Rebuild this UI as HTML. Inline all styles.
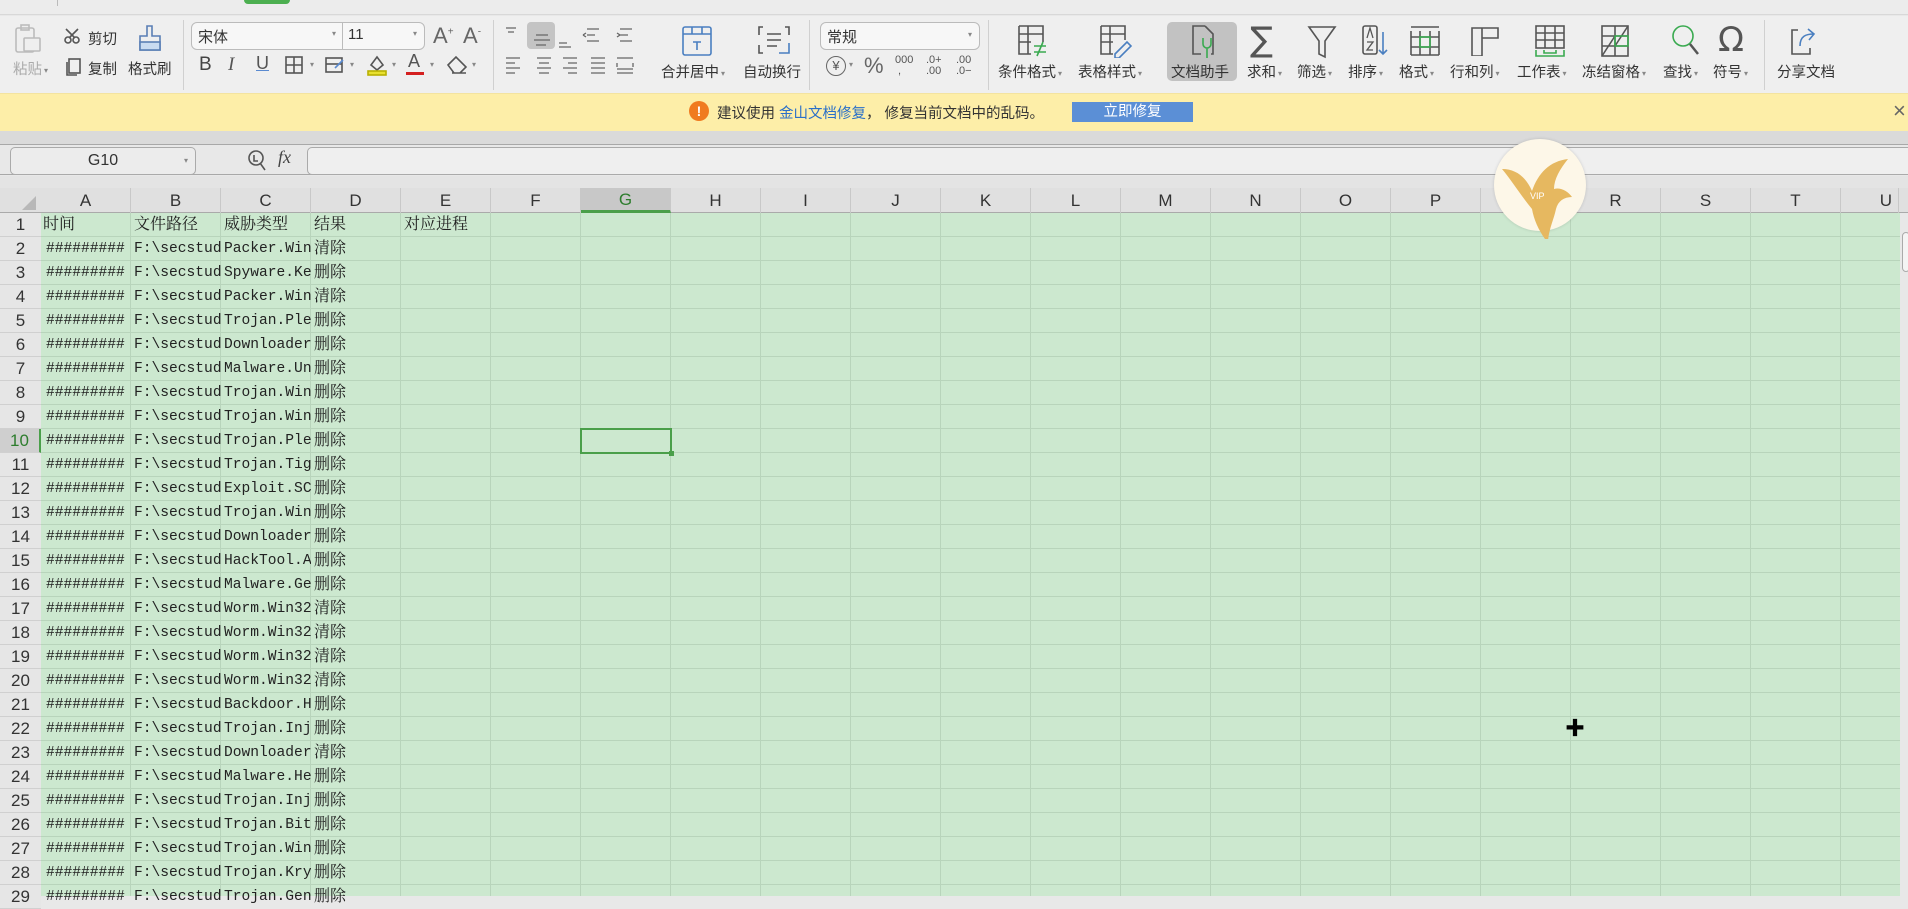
<!DOCTYPE html>
<html><head><meta charset="utf-8"><style>
*{margin:0;padding:0;box-sizing:border-box}
body{width:1908px;height:896px;overflow:hidden;background:#e8e8e8;font-family:"Liberation Sans","Noto Sans CJK SC",sans-serif;position:relative;color:#333}
.a{position:absolute}
.lbl{position:absolute;font-size:14.5px;color:#333;white-space:nowrap}
.sep{position:absolute;top:20px;width:1px;height:70px;background:#d0d0d0}
.dd{font-size:8px;color:#888;margin-left:2px;vertical-align:middle}
svg.i{position:absolute;fill:none;stroke:#555;stroke-width:1.6}
.ch{position:absolute;top:188px;height:25px;width:90px;text-align:center;font-size:17px;line-height:25px;color:#333;border-right:1px solid #c8c8c8}
.rh{position:absolute;left:0;width:41px;height:24px;text-align:center;font-size:17px;line-height:24px;color:#333;border-bottom:1px solid #d0d0d0;background:#e6e6e6}
.c{position:absolute;height:24px;line-height:24px;font-family:"Liberation Mono","Noto Serif CJK SC",monospace;font-size:14.6px;color:#222;overflow:hidden;white-space:nowrap}
</style></head><body>
<!-- top strip -->
<div class="a" style="left:0;top:0;width:1908px;height:15px;background:#ececec;border-bottom:1px solid #d8d8d8"></div>
<div class="a" style="left:57px;top:0;width:1px;height:6px;background:#bbb"></div>
<div class="a" style="left:244px;top:0;width:46px;height:4px;background:#4caf50;border-radius:0 0 6px 6px"></div>
<!-- ribbon -->
<div class="a" style="left:0;top:16px;width:1908px;height:77px;background:#efefef"></div>

<!-- clipboard -->
<svg class="i" style="left:12px;top:24px;stroke:#bbb" width="34" height="32"><rect x="4" y="4" width="18" height="24" rx="2"/><rect x="9" y="1" width="8" height="5"/><rect x="12" y="14" width="16" height="13" rx="1" fill="#efefef"/></svg>
<div class="lbl" style="left:13px;top:58px;color:#aaa">粘贴<span class="dd">▾</span></div>
<svg class="i" style="left:64px;top:28px" width="22" height="16"><circle cx="4" cy="12" r="3"/><circle cx="12" cy="12" r="3"/><path d="M5 10L14 1M11 10L2 1"/></svg>
<div class="lbl" style="left:88px;top:28px">剪切</div>
<svg class="i" style="left:64px;top:58px" width="18" height="20"><rect x="5" y="1" width="11" height="14"/><path d="M3 4v13h10"/></svg>
<div class="lbl" style="left:88px;top:58px">复制</div>
<svg class="i" style="left:136px;top:24px;stroke:#5a7fb5" width="28" height="30"><path d="M11 2h5v10h8v14H4V12h7z"/><rect x="4" y="18" width="20" height="8" fill="#c9dbf0"/></svg>
<div class="lbl" style="left:128px;top:58px">格式刷</div>
<div class="sep" style="left:183px"></div>

<!-- font -->
<div class="a" style="left:191px;top:22px;width:234px;height:28px;border:1px solid #bbb;border-radius:6px;background:#f7f7f7"></div>
<div class="a" style="left:342px;top:22px;width:1px;height:28px;background:#bbb"></div>
<div class="lbl" style="left:198px;top:26px;font-size:15px">宋体</div>
<div class="lbl" style="left:332px;top:29px;font-size:8px;color:#888">▾</div>
<div class="lbl" style="left:348px;top:26px;font-size:15px">11</div>
<div class="lbl" style="left:413px;top:29px;font-size:8px;color:#888">▾</div>
<div class="lbl" style="left:433px;top:23px;font-size:22px;color:#666">A<sup style="font-size:10px">+</sup></div>
<div class="lbl" style="left:463px;top:23px;font-size:22px;color:#666">A<sup style="font-size:10px">-</sup></div>
<div class="lbl" style="left:199px;top:54px;font-size:19px;color:#444">B</div>
<div class="lbl" style="left:228px;top:54px;font-size:19px;color:#555;font-family:'Liberation Serif';font-style:italic">I</div>
<div class="lbl" style="left:256px;top:53px;font-size:18px;color:#555;text-decoration:underline;text-decoration-color:#5a8ad0">U</div>
<svg class="i" style="left:285px;top:56px" width="18" height="18"><rect x="1" y="1" width="16" height="16"/><path d="M9 1v16M1 9h16"/></svg>
<svg class="i" style="left:325px;top:56px" width="20" height="18"><rect x="1" y="2" width="16" height="14"/><path d="M1 8h16" /><path d="M10 12l8-8" stroke="#5a8ad0"/></svg>
<svg class="i" style="left:366px;top:53px" width="22" height="24"><path d="M5 12l6-8 6 8-6 5z"/><rect x="2" y="18" width="18" height="4" fill="#e8e030" stroke="#b8b000"/></svg>
<div class="lbl" style="left:408px;top:51px;font-size:18px;color:#555">A</div>
<div class="a" style="left:406px;top:72px;width:18px;height:3px;background:#d42020"></div>
<svg class="i" style="left:446px;top:55px" width="24" height="20"><path d="M2 10l8-8 10 10-6 6H8z M6 18h14"/></svg>
<div class="lbl" style="left:310px;top:60px;font-size:8px;color:#888">▾</div>
<div class="lbl" style="left:350px;top:60px;font-size:8px;color:#888">▾</div>
<div class="lbl" style="left:392px;top:60px;font-size:8px;color:#888">▾</div>
<div class="lbl" style="left:430px;top:60px;font-size:8px;color:#888">▾</div>
<div class="lbl" style="left:472px;top:60px;font-size:8px;color:#888">▾</div>
<div class="sep" style="left:493px"></div>

<!-- alignment -->
<div class="a" style="left:527px;top:22px;width:28px;height:27px;background:#c4c4c4;border-radius:4px"></div>
<svg class="i" style="left:503px;top:25px;stroke:#666;stroke-width:1.3" width="170" height="56">
<path d="M3 3h10M5 7h6M33 10h12M31 15h16M33 20h10M56 18h8M56 22h12M84 4h12M84 10h8M80 10l3-2M80 10l3 2M84 16h12M117 4h12M117 10h8M114 8l3 2-3 2M117 16h12"/>
<path d="M3 33h14M3 38h9M3 43h14M3 48h9M34 33h14M36 38h10M34 43h14M36 48h10M60 33h14M65 38h9M60 43h14M65 48h9M88 33h14M88 38h14M88 43h14M88 48h14M114 33h16M114 38v4M130 38v4M114 44h16M114 48h16"/>
</svg>
<svg class="i" style="left:681px;top:25px;stroke:#4a7fc0" width="34" height="32"><rect x="2" y="2" width="28" height="28" rx="2"/><path d="M2 9h28M11 2v7M21 2v7M12 17h8M16 17v8"/></svg>
<div class="lbl" style="left:661px;top:61px">合并居中<span class="dd">▾</span></div>
<svg class="i" style="left:757px;top:25px" width="34" height="32"><path d="M6 2H2v8M2 20v8h4M28 2h4v8M10 9h14M10 15h14M10 21h10"/><path d="M32 18v10H22" stroke="#4a7fc0"/></svg>
<div class="lbl" style="left:743px;top:61px">自动换行</div>
<div class="sep" style="left:809px"></div>

<!-- number -->
<div class="a" style="left:820px;top:22px;width:160px;height:28px;border:1px solid #bbb;border-radius:6px;background:#f7f7f7"></div>
<div class="lbl" style="left:827px;top:26px;font-size:15px">常规</div>
<div class="lbl" style="left:968px;top:30px;font-size:8px;color:#888">▾</div>
<div class="lbl" style="left:826px;top:56px;font-size:13px;color:#555;border:1.5px solid #666;border-radius:50%;width:20px;height:20px;line-height:17px;text-align:center">¥</div>
<div class="lbl" style="left:849px;top:60px;font-size:8px;color:#888">▾</div>
<div class="lbl" style="left:864px;top:53px;font-size:22px;color:#666">%</div>
<div class="lbl" style="left:895px;top:55px;font-size:11px;color:#555;line-height:11px">000<br>&nbsp;,</div>
<div class="lbl" style="left:926px;top:55px;font-size:11px;color:#555;line-height:11px">.0+<br>.00</div>
<div class="lbl" style="left:956px;top:55px;font-size:11px;color:#555;line-height:11px">.00<br>.0−</div>
<div class="sep" style="left:988px"></div>

<!-- right group -->
<svg class="i" style="left:1017px;top:24px" width="32" height="34"><path d="M2 2h24v16M2 2v28h12M2 10h24M2 18h12M11 2v28"/><path d="M17 22h12M17 28h12M26 18l-6 14" stroke="#3aaa50"/></svg>
<div class="lbl" style="left:998px;top:61px">条件格式<span class="dd">▾</span></div>
<svg class="i" style="left:1099px;top:24px" width="34" height="34"><path d="M2 2h24v14M2 2v28h12M2 10h24M2 18h12M11 2v28"/><path d="M16 30l12-12 4 4-12 12h-4z" stroke="#4a7fc0"/></svg>
<div class="lbl" style="left:1078px;top:61px">表格样式<span class="dd">▾</span></div>
<div class="a" style="left:1167px;top:22px;width:70px;height:59px;background:#c2c2c2;border-radius:5px"></div>
<svg class="i" style="left:1191px;top:24px" width="26" height="34"><path d="M14 2H2v28h8M14 2l8 8v20h-2"/><path d="M12 14v6a4 4 0 008 0v-6M16 24v10" stroke="#3aaa50"/></svg>
<div class="lbl" style="left:1171px;top:61px">文档助手</div>
<div class="lbl" style="left:1250px;top:20px;font-size:34px;color:#555;font-family:'DejaVu Sans'">∑</div>
<div class="lbl" style="left:1247px;top:61px">求和<span class="dd">▾</span></div>
<svg class="i" style="left:1307px;top:25px" width="30" height="34"><path d="M2 2h26L18 16v16l-6-3V16z"/></svg>
<div class="lbl" style="left:1297px;top:61px">筛选<span class="dd">▾</span></div>
<svg class="i" style="left:1361px;top:24px" width="30" height="34"><rect x="2" y="2" width="14" height="28" rx="2"/><path d="M6 14l3-10 3 10M6 18h6l-6 8h6" stroke-width="1.3"/><path d="M22 8v22M18 26l4 4 4-4" stroke="#4a7fc0"/></svg>
<div class="lbl" style="left:1348px;top:61px">排序<span class="dd">▾</span></div>
<svg class="i" style="left:1409px;top:25px" width="32" height="32"><path d="M2 2h28M2 30h28M2 6v24M30 6v24M2 12h28M2 22h28M11 6v24M21 6v24"/><rect x="11" y="12" width="10" height="10" stroke="#3aaa50"/></svg>
<div class="lbl" style="left:1399px;top:61px">格式<span class="dd">▾</span></div>
<svg class="i" style="left:1470px;top:26px" width="30" height="30"><path d="M2 30V2h26v10H12v18zM12 2v10"/></svg>
<div class="lbl" style="left:1450px;top:61px">行和列<span class="dd">▾</span></div>
<svg class="i" style="left:1534px;top:24px" width="32" height="34"><rect x="2" y="2" width="28" height="22"/><path d="M2 9h28M2 16h28M11 2v22M21 2v22"/><path d="M2 26v6h28v-6M10 26v3h12v-3" stroke="#3aaa50"/></svg>
<div class="lbl" style="left:1517px;top:61px">工作表<span class="dd">▾</span></div>
<svg class="i" style="left:1600px;top:24px" width="30" height="34"><rect x="2" y="2" width="26" height="30"/><path d="M2 12h26M2 22h26M15 2v30M2 32L15 12M15 22L28 2"/><path d="M15 12h13v10H15z" stroke="#3aaa50"/></svg>
<div class="lbl" style="left:1582px;top:61px">冻结窗格<span class="dd">▾</span></div>
<svg class="i" style="left:1671px;top:24px" width="30" height="34"><circle cx="12" cy="12" r="10" stroke="#3aaa50"/><path d="M19 20l8 10" stroke-width="2.5"/></svg>
<div class="lbl" style="left:1663px;top:61px">查找<span class="dd">▾</span></div>
<div class="lbl" style="left:1718px;top:20px;font-size:34px;color:#555;font-family:'DejaVu Sans'">Ω</div>
<div class="lbl" style="left:1713px;top:61px">符号<span class="dd">▾</span></div>
<div class="sep" style="left:1764px"></div>
<svg class="i" style="left:1788px;top:26px" width="30" height="30"><path d="M10 4H4v24h18v-6" /><path d="M12 20c0-10 6-12 14-12M20 3l6 5-5 6" stroke="#4a7fc0"/></svg>
<div class="lbl" style="left:1777px;top:61px">分享文档</div>

<!-- notification -->
<div class="a" style="left:0;top:93px;width:1908px;height:38px;background:#fdeea8;border-top:1px solid #f3e3a0"></div>
<div class="a" style="left:689px;top:101px;width:20px;height:20px;border-radius:50%;background:#f07b20;color:#fff;font-size:14px;font-weight:bold;text-align:center;line-height:20px">!</div>
<div class="lbl" style="left:717px;top:102px">建议使用 <span style="color:#2a6fc8">金山文档修复</span>， 修复当前文档中的乱码。</div>
<div class="a" style="left:1072px;top:102px;width:121px;height:20px;background:#5b8fd6;color:#fff;font-size:14.5px;text-align:center;line-height:20px">立即修复</div>
<div class="lbl" style="left:1893px;top:98px;font-size:22px;color:#666">×</div>

<!-- formula bar -->
<div class="a" style="left:0;top:131px;width:1908px;height:14px;background:#dadada;border-bottom:1px solid #a8a8a8"></div>
<div class="a" style="left:0;top:146px;width:1908px;height:29px;background:#e8e8e8;border-bottom:1px solid #a8a8a8"></div>
<div class="a" style="left:10px;top:147px;width:186px;height:28px;border:1px solid #aaa;border-radius:5px;background:#ececec;text-align:center;font-size:16px;line-height:26px;color:#333">G10</div>
<div class="lbl" style="left:184px;top:156px;font-size:8px;color:#888">▾</div>
<svg class="i" style="left:247px;top:148px" width="22" height="24"><circle cx="9" cy="10" r="7"/><path d="M13 15l5 7M7 7v6h4"/></svg>
<div class="lbl" style="left:278px;top:147px;font-size:18px;font-style:italic;font-family:'Liberation Serif';color:#444">fx</div>
<div class="a" style="left:307px;top:147px;width:1610px;height:28px;border:1px solid #aaa;border-radius:5px;background:#efefef"></div>

<!-- header band -->
<div class="a" style="left:0;top:176px;width:1908px;height:37px;background:#e0e0e0;border-bottom:1px solid #aaa"></div>
<div class="a" style="left:0;top:176px;width:1908px;height:12px;background:#e4e4e4"></div>
<svg class="a" style="left:22px;top:196px" width="14" height="14"><path d="M14 0V14H0z" fill="#b8b8b8"/></svg>
<div class="ch" style="left:41px">A</div><div class="ch" style="left:131px">B</div><div class="ch" style="left:221px">C</div><div class="ch" style="left:311px">D</div><div class="ch" style="left:401px">E</div><div class="ch" style="left:491px">F</div>
<div class="ch" style="left:581px;background:#c8c8c8;border-bottom:3px solid #4a9f4a;color:#2d7d2d;line-height:23px">G</div>
<div class="ch" style="left:671px">H</div><div class="ch" style="left:761px">I</div><div class="ch" style="left:851px">J</div><div class="ch" style="left:941px">K</div><div class="ch" style="left:1031px">L</div><div class="ch" style="left:1121px">M</div><div class="ch" style="left:1211px">N</div><div class="ch" style="left:1301px">O</div><div class="ch" style="left:1391px">P</div><div class="ch" style="left:1481px">Q</div><div class="ch" style="left:1571px">R</div><div class="ch" style="left:1661px">S</div><div class="ch" style="left:1751px">T</div><div class="ch" style="left:1841px;width:58px;text-align:right;padding-right:6px">U</div>

<!-- grid -->
<div class="a" style="left:41px;top:213px;width:1859px;height:683px;background-color:#cce8cf;background-image:repeating-linear-gradient(90deg,transparent 0 89px,#b8d4bb 89px 90px),repeating-linear-gradient(180deg,transparent 0 23px,#b8d4bb 23px 24px)"></div>
<div class="a" style="left:0;top:213px;width:41px;height:683px;background:#e6e6e6;border-right:1px solid #aaa"></div>
<div class="a" style="left:1900px;top:213px;width:8px;height:683px;background:#e8e8e8"></div>
<div class="a" style="left:1902px;top:232px;width:8px;height:40px;border:1px solid #aaa;border-radius:4px;background:#f4f4f4"></div>

<div id="rows"></div>
<!-- row headers + cells -->
<div class="rh" style="top:213px">1</div><div class="rh" style="top:237px">2</div><div class="rh" style="top:261px">3</div><div class="rh" style="top:285px">4</div><div class="rh" style="top:309px">5</div><div class="rh" style="top:333px">6</div><div class="rh" style="top:357px">7</div><div class="rh" style="top:381px">8</div><div class="rh" style="top:405px">9</div><div class="rh" style="top:429px;background:#cfcfcf;color:#2d7d2d;border-right:2px solid #4a9f4a">10</div><div class="rh" style="top:453px">11</div><div class="rh" style="top:477px">12</div><div class="rh" style="top:501px">13</div><div class="rh" style="top:525px">14</div><div class="rh" style="top:549px">15</div><div class="rh" style="top:573px">16</div><div class="rh" style="top:597px">17</div><div class="rh" style="top:621px">18</div><div class="rh" style="top:645px">19</div><div class="rh" style="top:669px">20</div><div class="rh" style="top:693px">21</div><div class="rh" style="top:717px">22</div><div class="rh" style="top:741px">23</div><div class="rh" style="top:765px">24</div><div class="rh" style="top:789px">25</div><div class="rh" style="top:813px">26</div><div class="rh" style="top:837px">27</div><div class="rh" style="top:861px">28</div><div class="rh" style="top:885px">29</div>

<div class="c" style="left:43px;top:213px;font-size:16px">时间</div>
<div class="c" style="left:134px;top:213px;font-size:16px">文件路径</div>
<div class="c" style="left:224px;top:213px;font-size:16px">威胁类型</div>
<div class="c" style="left:314px;top:213px;font-size:16px">结果</div>
<div class="c" style="left:404px;top:213px;font-size:16px">对应进程</div>

<script>
const d=[["Packer.Win32","清除"],["Spyware.Keylog","删除"],["Packer.Win32","清除"],["Trojan.Plemood","删除"],["Downloader.Win","删除"],["Malware.Unknown","删除"],["Trojan.Win32","删除"],["Trojan.Win32","删除"],["Trojan.Plemood","删除"],["Trojan.Tiggre","删除"],["Exploit.SCO","删除"],["Trojan.Win32","删除"],["Downloader.Win","删除"],["HackTool.Agent","删除"],["Malware.Gen","删除"],["Worm.Win32","清除"],["Worm.Win32","清除"],["Worm.Win32","清除"],["Worm.Win32","清除"],["Backdoor.Hupi","删除"],["Trojan.Inject","删除"],["Downloader.Win","清除"],["Malware.Heur","删除"],["Trojan.Inject","删除"],["Trojan.Bitmin","删除"],["Trojan.Win32","删除"],["Trojan.Kryptik","删除"],["Trojan.Gen","删除"]];
let h="";d.forEach((r,i)=>{const t=237+i*24;
h+=`<div class="c" style="left:46px;top:${t}px;width:84px">#########</div><div class="c" style="left:134px;top:${t}px;width:87px">F:\\secstudy\\x</div><div class="c" style="left:224px;top:${t}px;width:87px">${r[0]}</div><div class="c" style="left:314px;top:${t}px;font-size:16px">${r[1]}</div>`});
document.getElementById("rows").outerHTML=h;
</script>

<!-- selection -->
<div class="a" style="left:580px;top:428px;width:92px;height:26px;border:2px solid #4a9f4a"></div>
<div class="a" style="left:669px;top:451px;width:5px;height:5px;background:#4a9f4a"></div>

<!-- VIP bird -->
<div class="a" style="left:1494px;top:139px;width:92px;height:92px;border-radius:50%;background:#fdf7e8;box-shadow:0 0 3px rgba(0,0,0,.15)"></div>
<svg class="a" style="left:1494px;top:139px" width="100" height="100"><path d="M8 30c14 0 24 8 30 22 6-18 18-30 36-32-8 10-14 20-14 30 6-2 14 2 18 8-8 0-14 4-16 12-2 10-8 22-8 34-8-10-14-22-16-34C28 58 18 42 8 30z" fill="#e6b860"/><text x="36" y="60" font-size="9" fill="#fff" font-family="Liberation Sans">VIP</text></svg>

<!-- cursor -->
<div class="lbl" style="left:1565px;top:712px;font-size:20px;color:#000;font-weight:bold">✚</div>
</body></html>
